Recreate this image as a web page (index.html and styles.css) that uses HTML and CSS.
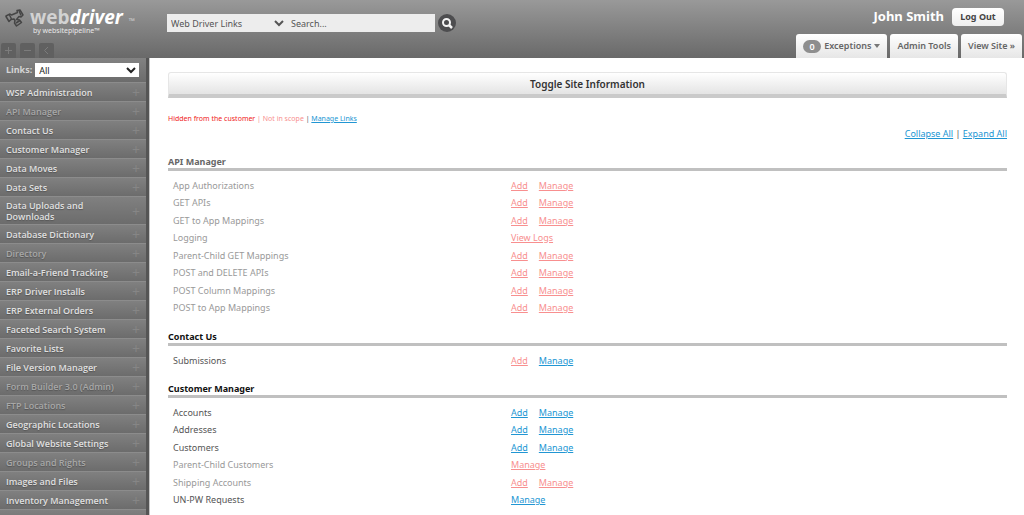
FILE: index.html
```html
<!DOCTYPE html>
<html lang="en">
<head>
<meta charset="utf-8">
<title>Web Driver</title>
<link rel="stylesheet" href="styles.css">
</head>
<body>
<header class="top">
  <div class="brand">
    <div class="logo">
      <svg class="logo-mark" width="20" height="20" viewBox="0 0 20 20" aria-hidden="true">
        <g fill="none" stroke="#454545" stroke-width="1.5" stroke-linejoin="round">
          <path d="M1 8l4-2 1.500 1 6-2.500-.5-2 3-.500 3 5-2 2-2-.500-2.500 3 3 .5 2 2.500-5 3.500-2-3 .5-2.500-1-1.500-3 .500-2 2-3-5z"/>
          <path d="M4.500 7l2 4M14 2.500l2 5M11 15l4-2.500"/>
        </g>
      </svg>
      <div class="logo-text">
        <div class="logo-name">web<em>driver</em><span class="tm">™</span></div>
        <div class="logo-sub">by websitepipeline™</div>
      </div>
    </div>
    <div class="panel-buttons">
      <button type="button" aria-label="Expand menu"><svg width="15" height="15" viewBox="0 0 15 15"><path d="M7.500 4v7M4 7.500h7"/></svg></button>
      <button type="button" aria-label="Collapse menu"><svg width="15" height="15" viewBox="0 0 15 15"><path d="M4 7.500h7"/></svg></button>
      <button type="button" aria-label="Hide menu"><svg width="15" height="15" viewBox="0 0 15 15"><path d="M9 4L5.500 7.500 9 11"/></svg></button>
    </div>
  </div>
  <form class="search">
    <select aria-label="Search in"><option>Web Driver Links</option></select>
    <input type="text" placeholder="Search..." aria-label="Search">
    <button type="button" aria-label="Search">
      <svg width="18" height="18" viewBox="0 0 18 18"><circle cx="9" cy="9" r="9" fill="#4d4d4f"/><g fill="none" stroke="#f4f4f4" stroke-width="2"><circle cx="8.500" cy="8.500" r="3.500"/><path d="M11 11l3 3" stroke-width="2.500"/></g></svg>
    </button>
  </form>
  <div class="account">
    <div class="user"><span class="user-name">John Smith</span><button type="button" class="logout">Log Out</button></div>
    <nav class="tabs">
      <a href="#"><span class="count">0</span>Exceptions<svg width="6" height="4" viewBox="0 0 6 4"><path d="M0 0h6L3 4z" fill="#777"/></svg></a>
      <a href="#">Admin Tools</a>
      <a href="#">View Site »</a>
    </nav>
  </div>
</header>
<div class="body">
  <aside class="side">
    <div class="filter"><label for="links">Links:</label><select id="links"><option>All</option></select></div>
    <nav class="menu">
      <a href="#">WSP Administration</a>
      <a href="#" class="off">API Manager</a>
      <a href="#">Contact Us</a>
      <a href="#">Customer Manager</a>
      <a href="#">Data Moves</a>
      <a href="#">Data Sets</a>
      <a href="#">Data Uploads and<br>Downloads</a>
      <a href="#">Database Dictionary</a>
      <a href="#" class="off">Directory</a>
      <a href="#">Email-a-Friend Tracking</a>
      <a href="#">ERP Driver Installs</a>
      <a href="#">ERP External Orders</a>
      <a href="#">Faceted Search System</a>
      <a href="#">Favorite Lists</a>
      <a href="#">File Version Manager</a>
      <a href="#" class="off">Form Builder 3.0 (Admin)</a>
      <a href="#" class="off">FTP Locations</a>
      <a href="#">Geographic Locations</a>
      <a href="#">Global Website Settings</a>
      <a href="#" class="off">Groups and Rights</a>
      <a href="#">Images and Files</a>
      <a href="#">Inventory Management</a>
      <a href="#" aria-label="More"></a>
    </nav>
  </aside>
  <main class="content">
    <button type="button" class="toggle">Toggle Site Information</button>
    <p class="legend"><span class="hidden-key">Hidden from the customer</span> <span class="scope-key">| Not in scope</span> | <a href="#">Manage Links</a></p>
    <p class="expand"><a href="#">Collapse All</a> | <a href="#">Expand All</a></p>
    <section>
      <h2 class="muted">API Manager</h2>
      <ul>
        <li class="dim"><span>App Authorizations</span><a href="#">Add</a><a href="#">Manage</a></li>
        <li class="dim"><span>GET APIs</span><a href="#">Add</a><a href="#">Manage</a></li>
        <li class="dim"><span>GET to App Mappings</span><a href="#">Add</a><a href="#">Manage</a></li>
        <li class="dim"><span>Logging</span><a href="#">View Logs</a></li>
        <li class="dim"><span>Parent-Child GET Mappings</span><a href="#">Add</a><a href="#">Manage</a></li>
        <li class="dim"><span>POST and DELETE APIs</span><a href="#">Add</a><a href="#">Manage</a></li>
        <li class="dim"><span>POST Column Mappings</span><a href="#">Add</a><a href="#">Manage</a></li>
        <li class="dim"><span>POST to App Mappings</span><a href="#">Add</a><a href="#">Manage</a></li>
      </ul>
    </section>
    <section>
      <h2>Contact Us</h2>
      <ul>
        <li><span>Submissions</span><a href="#" class="pink">Add</a><a href="#">Manage</a></li>
      </ul>
    </section>
    <section>
      <h2>Customer Manager</h2>
      <ul>
        <li><span>Accounts</span><a href="#">Add</a><a href="#">Manage</a></li>
        <li><span>Addresses</span><a href="#">Add</a><a href="#">Manage</a></li>
        <li><span>Customers</span><a href="#">Add</a><a href="#">Manage</a></li>
        <li class="dim"><span>Parent-Child Customers</span><a href="#">Manage</a></li>
        <li class="dim"><span>Shipping Accounts</span><a href="#">Add</a><a href="#">Manage</a></li>
        <li><span>UN-PW Requests</span><a href="#">Manage</a></li>
      </ul>
    </section>
  </main>
</div>
</body>
</html>
```
FILE: styles.css
```css
* { box-sizing: border-box; }
html, body { height: 100%; }
body {
  margin: 0;
  display: flex;
  flex-direction: column;
  overflow: hidden;
  font: 9px/16px "Noto Sans", "Open Sans", sans-serif;
  color: #555;
  background: #fff;
}
button, select, input { font: inherit; color: inherit; border: 0; margin: 0; padding: 0; border-radius: 0; }
a { color: #2196d3; }
h2, p, ul { margin: 0; padding: 0; }

.top {
  display: flex;
  flex: none;
  height: 58px;
  background: linear-gradient(#999, #696969);
}
.brand { width: 167px; display: flex; flex-direction: column; justify-content: space-between; }
.logo { display: flex; gap: 5px; padding: 8px 0 0 5px; }
.logo-name { font-family: "Open Sans", sans-serif; font-size: 19px; line-height: 18px; font-weight: 700; color: #d2d2d2; white-space: nowrap; }
.logo-name em { color: #fff; }
.tm { margin-left: 6px; font-size: 8px; line-height: 0; color: #ccc; }
.logo-sub { font-size: 7px; line-height: 10px; padding-left: 3px; color: #e8e8e8; }
.panel-buttons { display: flex; gap: 4px; padding-left: 1px; }
.panel-buttons button { width: 15px; height: 15px; background: #606060; border-radius: 2px 2px 0 0; }
.panel-buttons svg { display: block; fill: none; stroke: #7c7c7c; }

.search { flex: 1; display: flex; align-items: flex-start; padding-top: 14px; }
.search select { width: 120px; height: 18px; background: #ededed; }
.search input { width: 148px; height: 18px; padding-left: 4px; background: #ededed; }
.search input::placeholder { color: #555; opacity: 1; }
.search button { margin-left: 3px; background: none; }
.search svg { display: block; }

.account { display: flex; flex-direction: column; justify-content: space-between; align-items: flex-end; padding: 8px 2px 0 0; }
.user { display: flex; gap: 8px; padding-right: 18px; }
.user-name { font-size: 13px; font-weight: 700; color: #fff; }
.logout { width: 52px; height: 18px; border-radius: 4px; background: linear-gradient(#fff, #eee); color: #444; font-weight: 700; }
.tabs { display: flex; gap: 3px; }
.tabs a {
  display: flex;
  align-items: center;
  height: 24px;
  padding: 0 7px;
  border-radius: 3px 3px 0 0;
  background: linear-gradient(#fff, #e6e6e6);
  color: #666;
  font-weight: 600;
  text-decoration: none;
}
.tabs svg { margin-left: 3px; }
.count { width: 18px; margin-right: 3px; border-radius: 7px; background: #8e8e8e; color: #fff; line-height: 13px; text-align: center; }

.body { flex: 1; min-height: 0; display: flex; }
.side { flex: none; width: 150px; overflow: hidden; border-right: 1px solid #c4c4c4; background: #555; padding-right: 3px; }
.filter { display: flex; align-items: center; gap: 3px; height: 24px; padding: 0 7px 0 6px; background: linear-gradient(#828282, #6c6c6c); color: #d4d4d4; font-weight: 700; }
.filter select { flex: 1; height: 14px; background: #fff; color: #222; font-weight: 400; }
.menu a {
  display: flex;
  align-items: center;
  justify-content: space-between;
  min-height: 19px;
  padding: 3px 6px 2px;
  border-top: 1px solid #8c8c8c;
  background: linear-gradient(#808080, #6c6c6c);
  color: #e0e0e0;
  font-family: "Open Sans", sans-serif;
  line-height: 11px;
  font-weight: 600;
  text-decoration: none;
  text-shadow: 0 1px 1px #555;
}
.menu a::after { content: "+"; color: #868686; font-size: 14px; font-weight: 400; text-shadow: none; }
.menu .off { color: #a8a8a8; }

.content { flex: 1; min-width: 0; padding: 14px 17px 0 18px; }
.toggle {
  display: block;
  width: 100%;
  height: 26px;
  border: 1px solid #e6e6e6;
  border-bottom: 4px solid #cacaca;
  border-radius: 3px 3px 0 0;
  background: linear-gradient(#fff, #e4e4e4);
  color: #333;
  font-size: 10px;
  font-weight: 600;
}
.legend { padding-top: 13px; font-size: 7px; line-height: 15px; }
.hidden-key { color: #f02222; }
.scope-key, .pink, .dim a { color: #f88f8f; }
.expand { text-align: right; }
h2 { font-size: 9px; line-height: 13px; color: #111; border-bottom: 3px solid #c0c0c0; }
.muted { color: #666; }
section { padding-top: 13px; }
ul { list-style: none; padding: 6px 0 0 5px; }
li { display: flex; height: 17px; align-items: center; }
li:nth-child(even) { height: 18px; }
li span { width: 338px; }
li a { margin-right: 11px; }
.dim { color: #999; }
```
